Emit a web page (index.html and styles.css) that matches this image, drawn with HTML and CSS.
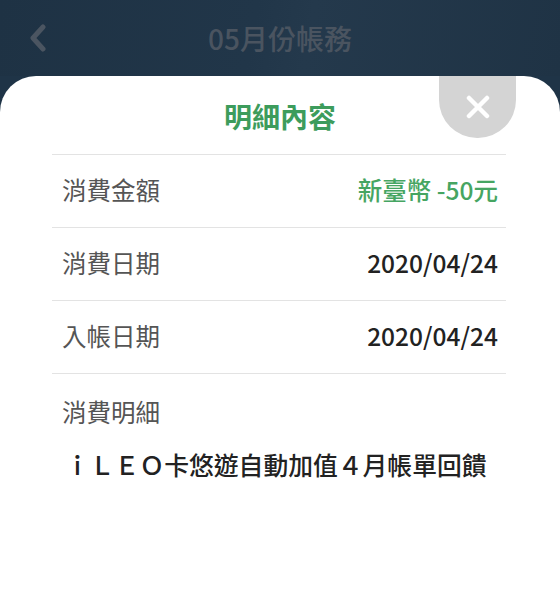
FILE: index.html
```html
<!DOCTYPE html>
<html lang="zh-Hant">
<head>
<meta charset="utf-8">
<link rel="stylesheet" href="styles.css">
</head>
<body>
<div class="screen">
  <header class="topbar">
    <svg class="back" width="20" height="28" viewBox="0 0 20 28"><polyline points="15,3 5,14 15,25" fill="none" stroke="#4b5561" stroke-width="5" stroke-linecap="round" stroke-linejoin="round"/></svg>
    <h1 class="topbar-title">05月份帳務</h1>
  </header>
  <section class="sheet">
    <button class="close" aria-label="關閉">
      <svg width="24" height="24" viewBox="0 0 24 24"><path d="M3 3 L21 21 M21 3 L3 21" stroke="#fff" stroke-width="4.5" stroke-linecap="round"/></svg>
    </button>
    <h2 class="sheet-title">明細內容</h2>
    <div class="list">
      <div class="row">
        <span class="label">消費金額</span>
        <span class="value green">新臺幣 -50元</span>
      </div>
      <div class="row">
        <span class="label">消費日期</span>
        <span class="value">2020/04/24</span>
      </div>
      <div class="row">
        <span class="label">入帳日期</span>
        <span class="value">2020/04/24</span>
      </div>
      <div class="detail">
        <span class="label">消費明細</span>
        <p class="desc">ｉＬＥＯ卡悠遊自動加值４月帳單回饋</p>
      </div>
    </div>
  </section>
</div>
</body>
</html>
```
FILE: styles.css
```css
* { box-sizing: border-box; }
html, body { margin: 0; padding: 0; }
body {
  width: 560px;
  height: 600px;
  overflow: hidden;
  font-family: "Noto Sans CJK TC", "Noto Sans", sans-serif;
  background: #1f3447;
}
.screen {
  display: flex;
  flex-direction: column;
  height: 600px;
}
.topbar {
  height: 76px;
  flex: none;
  display: flex;
  align-items: center;
  justify-content: center;
  position: relative;
  background: linear-gradient(100deg, #1e3244 0%, #213649 45%, #24394c 55%, #1f3345 100%);
}
.back {
  position: absolute;
  left: 28px;
  top: 24px;
}
.topbar-title {
  margin: 0;
  font-size: 28px;
  font-weight: 500;
  color: #4a5460;
  line-height: 1;
}
.sheet {
  flex: 1;
  background: #fff;
  border-radius: 36px 36px 0 0;
  position: relative;
}
.close {
  position: absolute;
  top: 0;
  right: 44px;
  width: 77px;
  height: 62px;
  border: 0;
  padding: 0;
  background: #d4d4d4;
  border-radius: 0 0 38px 38px;
  display: flex;
  align-items: center;
  justify-content: center;
}
.sheet-title {
  margin: 0;
  height: 78px;
  display: flex;
  align-items: center;
  justify-content: center;
  padding-top: 2px;
  font-size: 28px;
  font-weight: 700;
  color: #3d9c5c;
}
.list {
  margin: 0 54px 0 52px;
}
.row {
  height: 73px;
  border-top: 1.5px solid #e3e3e3;
  display: flex;
  align-items: center;
  justify-content: space-between;
  padding: 0 8px 3px 10px;
}
.label {
  font-size: 24.5px;
  color: #555;
  font-weight: 400;
}
.value {
  font-size: 24.5px;
  font-weight: 500;
  color: #222;
}
.value.green { color: #46a562; }
.detail {
  border-top: 1.5px solid #e3e3e3;
  padding: 20px 0 0 10px;
}
.desc {
  margin: 17px 0 0 3px;
  font-size: 24.8px;
  font-weight: 500;
  color: #222;
}
```
